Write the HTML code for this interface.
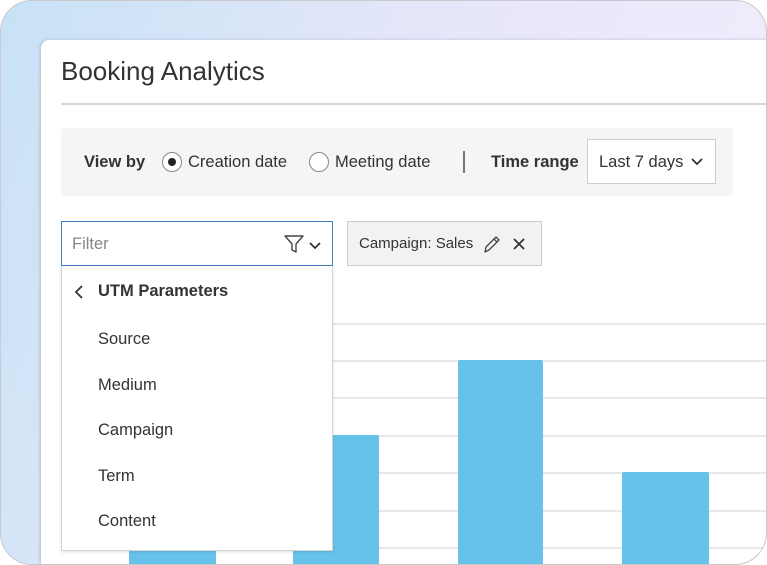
<!DOCTYPE html>
<html><head><style>
*{margin:0;padding:0;box-sizing:border-box}
body{width:767px;height:565px;overflow:hidden;background:#fff;font-family:"Liberation Sans","DejaVu Sans",sans-serif;color:#333;position:relative}
.frame{position:absolute;left:0;top:0;width:767px;height:565px;border-radius:32px;overflow:hidden;background:linear-gradient(110deg,#c7e2f5 0%,#e6e6fa 45%,#f3effc 100%)}
.border{position:absolute;left:0;top:0;width:767px;height:565px;border:1.5px solid #c9c9cf;border-radius:32px;pointer-events:none}
.card{position:absolute;left:41px;top:40px;width:740px;height:540px;background:#fff;border-radius:8px;box-shadow:-1px 0 3px rgba(120,120,160,.35)}
.abs{position:absolute}
.grid{position:absolute;left:333px;width:440px;height:1.5px;background:#e8e8e8}
.bar{position:absolute;background:#67c2ea}
.item{position:absolute;left:98px;font-size:16.5px;color:#333}
</style></head><body>
<div class="frame">
<div class="card"></div>
<div class="abs" style="left:61px;top:56px;font-size:26px;color:#333">Booking Analytics</div>
<div class="abs" style="left:61px;top:103px;width:710px;height:1.5px;background:#d6d6d6"></div>
<div class="abs" style="left:61px;top:128px;width:672px;height:68px;background:#f5f5f5;border-radius:4px"></div>
<div class="abs" style="left:84px;top:153px;font-size:16.5px;font-weight:bold;color:#333">View by</div>
<div class="abs" style="left:162px;top:152px;width:20px;height:20px;border:1.5px solid #888;border-radius:50%;background:#fff"><div style="position:absolute;left:4.5px;top:4.5px;width:8px;height:8px;border-radius:50%;background:#222"></div></div>
<div class="abs" style="left:188px;top:153px;font-size:16.5px">Creation date</div>
<div class="abs" style="left:309px;top:152px;width:20px;height:20px;border:1.5px solid #888;border-radius:50%;background:#fff"></div>
<div class="abs" style="left:335px;top:153px;font-size:16.5px">Meeting date</div>
<div class="abs" style="left:463px;top:151px;width:1.5px;height:22px;background:#777"></div>
<div class="abs" style="left:491px;top:153px;font-size:16.5px;font-weight:bold">Time range</div>
<div class="abs" style="left:587px;top:139px;width:129px;height:45px;border:1.5px solid #ccc;background:#fff"></div>
<div class="abs" style="left:599px;top:153px;font-size:16.5px">Last 7 days</div>
<svg class="abs" style="left:690px;top:157px" width="14" height="10"><path d="M2 2l5 5 5-5" stroke="#333" stroke-width="1.8" fill="none"/></svg>
<div class="grid" style="top:323px"></div><div class="grid" style="top:360px"></div><div class="grid" style="top:397px"></div><div class="grid" style="top:435px"></div><div class="grid" style="top:472px"></div><div class="grid" style="top:510px"></div><div class="grid" style="top:547px"></div>
<div class="bar" style="left:129px;top:540px;width:87px;height:30px"></div>
<div class="bar" style="left:293px;top:435px;width:86px;height:140px;border-radius:2px 2px 0 0"></div>
<div class="bar" style="left:458px;top:360px;width:85px;height:210px;border-radius:2px 2px 0 0"></div>
<div class="bar" style="left:622px;top:472px;width:87px;height:100px;border-radius:2px 2px 0 0"></div>
<div class="abs" style="left:61px;top:221px;width:272px;height:45px;border:1.5px solid #3d7fc1;background:#fff"></div>
<div class="abs" style="left:72px;top:235px;font-size:16.5px;color:#888">Filter</div>
<svg class="abs" style="left:284px;top:234px" width="40" height="20"><path d="M1 2h18l-7 8v8l-4-2v-6z" stroke="#444" stroke-width="1.4" fill="none" stroke-linejoin="round"/><path d="M26 9l5 5 5-5" stroke="#333" stroke-width="1.8" fill="none"/></svg>
<div class="abs" style="left:61px;top:266px;width:272px;height:285px;background:#fff;border:1.5px solid #d4d4d4;border-top:none;box-shadow:0 1px 3px rgba(0,0,0,.12)"></div>
<svg class="abs" style="left:73px;top:284px" width="12" height="16"><path d="M9 2L3 8l6 6" stroke="#333" stroke-width="1.8" fill="none"/></svg>
<div class="abs" style="left:98px;top:282px;font-size:16.5px;font-weight:bold">UTM Parameters</div>
<div class="item" style="top:330px">Source</div>
<div class="item" style="top:376px">Medium</div>
<div class="item" style="top:421px">Campaign</div>
<div class="item" style="top:467px">Term</div>
<div class="item" style="top:512px">Content</div>
<div class="abs" style="left:347px;top:221px;width:195px;height:45px;border:1.5px solid #ccc;background:#f2f2f2"></div>
<div class="abs" style="left:359px;top:235px;font-size:15px">Campaign: Sales</div>
<svg class="abs" style="left:481px;top:233px" width="22" height="22"><path d="M4 19l1-5L15 4l3 3L8 17z M13 6l3 3" stroke="#444" stroke-width="1.3" fill="none" stroke-linejoin="round"/></svg>
<svg class="abs" style="left:512px;top:237px" width="14" height="14"><path d="M2 2l10 10M12 2L2 12" stroke="#333" stroke-width="1.8"/></svg>
</div>
<div class="border"></div>
</body></html>
